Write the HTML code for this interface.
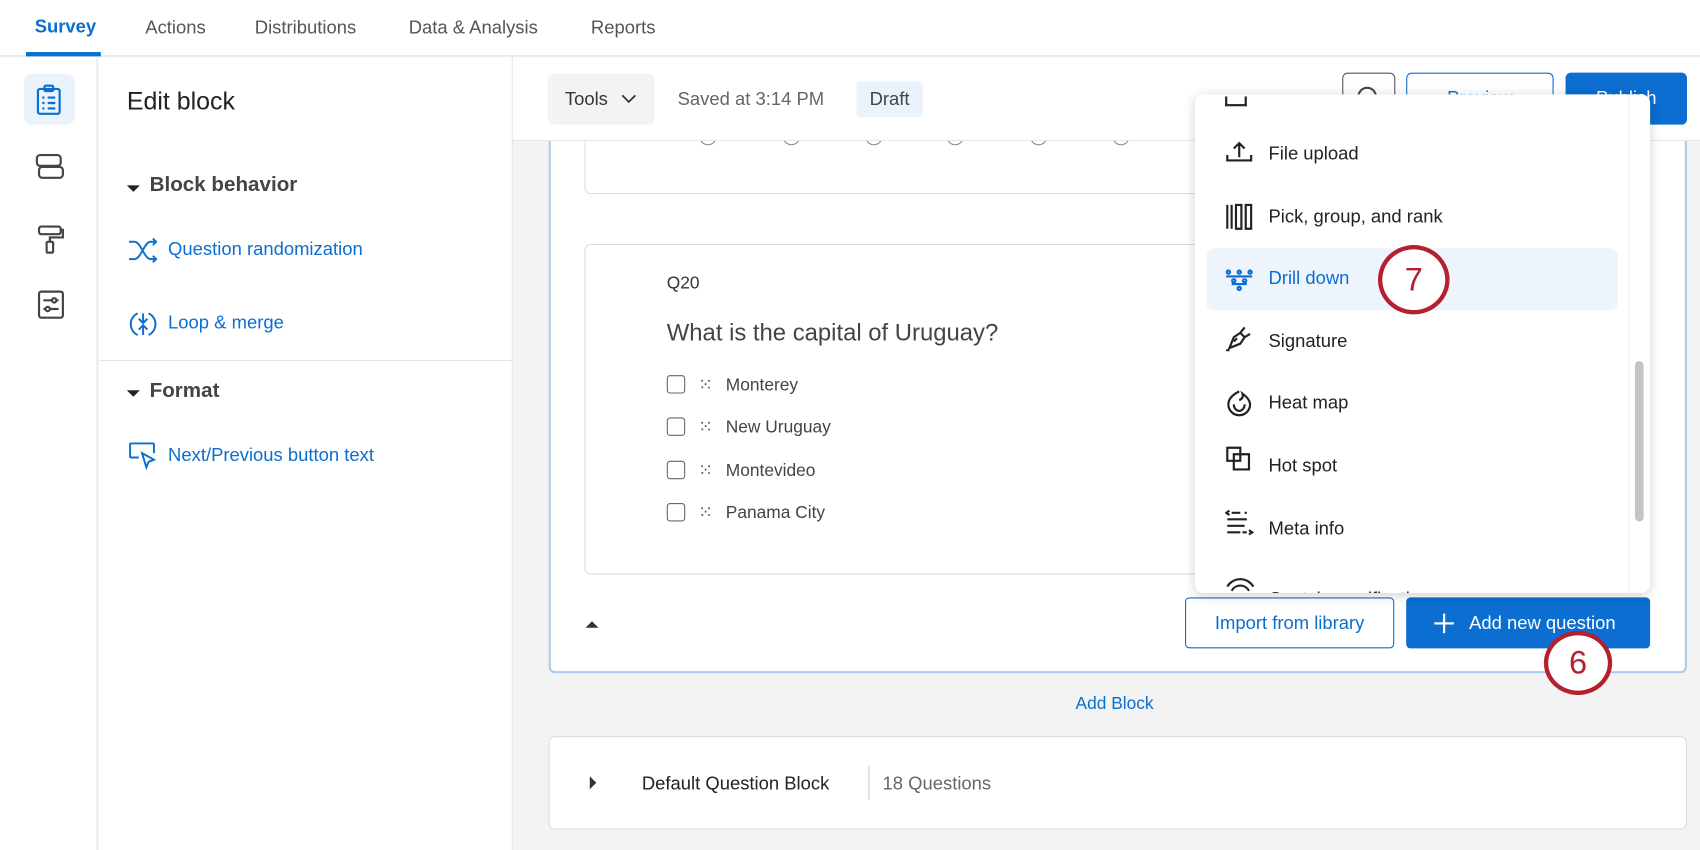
<!DOCTYPE html>
<html><head><meta charset="utf-8"><style>
*{box-sizing:border-box;margin:0;padding:0}
html,body{width:1700px;height:850px;overflow:hidden;background:#fff;font-family:"Liberation Sans",sans-serif}
#w{position:absolute;left:0;top:0;width:1568px;height:784px;transform:scale(1.08418);transform-origin:0 0;background:#f3f3f4}
.a{position:absolute}
.t{color:#32363a}
.blue{color:#0b6ed0}
.rc{position:absolute;top:118px;width:16px;height:16px;border:1.5px solid #888;border-radius:50%}
</style></head><body><div id="w">
<div class="a" style="left:0;top:0;width:1568px;height:52px;background:#fff;border-bottom:1px solid #e4e4e6"></div>
<div class="a" style="left:32px;top:15px;font-size:17px;font-weight:bold;color:#0b6ed0">Survey</div>
<div class="a" style="left:24px;top:48px;width:69px;height:4px;background:#0b6ed0"></div>
<div class="a t" style="left:134px;top:16px;font-size:17px;color:#555">Actions</div>
<div class="a t" style="left:235px;top:16px;font-size:17px;color:#555">Distributions</div>
<div class="a t" style="left:377px;top:16px;font-size:17px;color:#555">Data &amp; Analysis</div>
<div class="a t" style="left:545px;top:16px;font-size:17px;color:#555">Reports</div>
<div class="a" style="left:0;top:53px;width:90px;height:731px;background:#fff;border-right:1px solid #e4e4e6"></div>
<div class="a" style="left:22px;top:68px;width:47px;height:47px;background:#eaf2fc;border-radius:8px"></div>
<svg class="a" style="left:32px;top:77px" width="26" height="30" viewBox="0 0 26 30" fill="none" stroke="#0b6ed0" stroke-width="2"><rect x="3" y="5" width="20" height="23" rx="2"/><rect x="9" y="2" width="8" height="5" rx="1"/><path d="M7 13h2M12 13h7M7 18h2M12 18h7M7 23h2M12 23h7"/></svg>
<svg class="a" style="left:32px;top:140px" width="28" height="28" viewBox="0 0 28 28" fill="none" stroke="#444" stroke-width="2"><rect x="2" y="3" width="22" height="10" rx="3"/><rect x="4" y="14" width="22" height="10" rx="3"/></svg>
<svg class="a" style="left:34px;top:207px" width="26" height="28" viewBox="0 0 26 28" fill="none" stroke="#444" stroke-width="2"><rect x="2" y="2" width="20" height="7" rx="2"/><path d="M22 5h2v7H12v4"/><rect x="9" y="16" width="6" height="10" rx="1"/></svg>
<svg class="a" style="left:34px;top:267px" width="26" height="28" viewBox="0 0 26 28" fill="none" stroke="#444" stroke-width="2"><rect x="2" y="2" width="22" height="24" rx="2"/><path d="M6 10h8M18 10h2M6 18h2M12 18h8"/><circle cx="16" cy="10" r="2"/><circle cx="10" cy="18" r="2"/></svg>
<div class="a" style="left:91px;top:53px;width:382px;height:731px;background:#fff;border-right:1px solid #e4e4e6"></div>
<div class="a t" style="left:117px;top:80px;font-size:23px;color:#222">Edit block</div>
<div class="a" style="left:117px;top:171px;border-left:6px solid transparent;border-right:6px solid transparent;border-top:6px solid #222"></div>
<div class="a" style="left:138px;top:160px;font-size:19px;font-weight:bold;color:#444">Block behavior</div>
<svg class="a" style="left:118px;top:219px" width="28" height="24" viewBox="0 0 28 24" fill="none" stroke="#0b6ed0" stroke-width="1.8"><path d="M1 4h5c6 0 9 16 15 16h5M1 20h5c6 0 9-16 15-16h5M23 1l3 3-3 3M23 17l3 3-3 3"/></svg>
<div class="a blue" style="left:155px;top:220px;font-size:17px">Question randomization</div>
<svg class="a" style="left:118px;top:285px" width="28" height="28" viewBox="0 0 28 28" fill="none" stroke="#0b6ed0" stroke-width="1.8"><path d="M9 4A11 11 0 0 0 9 24M19 4a11 11 0 0 1 0 20M14 4v9M10 9l4 4 4-4M14 24v-9M10 19l4-4 4 4"/></svg>
<div class="a blue" style="left:155px;top:288px;font-size:17px">Loop &amp; merge</div>
<div class="a" style="left:91px;top:332px;width:382px;height:1px;background:#e4e4e6"></div>
<div class="a" style="left:117px;top:360px;border-left:6px solid transparent;border-right:6px solid transparent;border-top:6px solid #222"></div>
<div class="a" style="left:138px;top:350px;font-size:19px;font-weight:bold;color:#444">Format</div>
<svg class="a" style="left:118px;top:406px" width="28" height="28" viewBox="0 0 28 28" fill="none" stroke="#0b6ed0" stroke-width="1.8"><path d="M10 16H3a1 1 0 0 1-1-1V4a1 1 0 0 1 1-1h20a1 1 0 0 1 1 1v8M13 12l4 13 2-5 5-2z"/></svg>
<div class="a blue" style="left:155px;top:410px;font-size:17px">Next/Previous button text</div>
<div class="a" style="left:506px;top:100px;width:1050px;height:521px;background:#fff;border:2px solid #a8ccef;border-top:none;border-radius:0 0 6px 6px"></div>
<div class="a" style="left:539px;top:100px;width:600px;height:79px;border:1px solid #dcdcde;border-top:none;border-radius:0 0 6px 6px"></div>
<div class="rc" style="left:645px"></div><div class="rc" style="left:722px"></div><div class="rc" style="left:798px"></div><div class="rc" style="left:873px"></div><div class="rc" style="left:950px"></div><div class="rc" style="left:1026px"></div>
<div class="a" style="left:539px;top:225px;width:600px;height:305px;border:1px solid #dcdcde;border-radius:6px;background:#fff"></div>
<div class="a t" style="left:615px;top:253px;font-size:16px">Q20</div>
<div class="a" style="left:615px;top:294px;font-size:22px;color:#444">What is the capital of Uruguay?</div>
<div class="a" style="left:615px;top:336px;font-size:16px;color:#444;line-height:39.3px">
<div><span style="display:inline-block;width:17px;height:17px;border:1.5px solid #666;border-radius:3px;vertical-align:-3px;margin-right:12px"></span><span style="color:#555;margin-right:12px">⁙</span>Monterey</div>
<div><span style="display:inline-block;width:17px;height:17px;border:1.5px solid #666;border-radius:3px;vertical-align:-3px;margin-right:12px"></span><span style="color:#555;margin-right:12px">⁙</span>New Uruguay</div>
<div><span style="display:inline-block;width:17px;height:17px;border:1.5px solid #666;border-radius:3px;vertical-align:-3px;margin-right:12px"></span><span style="color:#555;margin-right:12px">⁙</span>Montevideo</div>
<div><span style="display:inline-block;width:17px;height:17px;border:1.5px solid #666;border-radius:3px;vertical-align:-3px;margin-right:12px"></span><span style="color:#555;margin-right:12px">⁙</span>Panama City</div>
</div>
<div class="a" style="left:540px;top:573px;border-left:6px solid transparent;border-right:6px solid transparent;border-bottom:6px solid #333"></div>
<div class="a" style="left:1093px;top:551px;width:193px;height:47px;border:1.5px solid #0b6ed0;border-radius:4px;background:#fff;color:#0b6ed0;font-size:17px;text-align:center;line-height:46px">Import from library</div>
<div class="a" style="left:1297px;top:551px;width:225px;height:47px;border-radius:4px;background:#0b6ed0;color:#fff;font-size:17px;line-height:47px;padding-left:58px">Add new question</div>
<div class="a" style="left:1323px;top:574px;width:18px;height:2px;background:#fff"></div>
<div class="a" style="left:1331px;top:566px;width:2px;height:18px;background:#fff"></div>
<div class="a" style="left:1424px;top:582px;width:63px;height:59px;border:4px solid #b5202e;border-radius:50%;background:#fff;color:#b5202e;font-size:30px;text-align:center;line-height:52px">6</div>
<div class="a blue" style="left:992px;top:641px;font-size:16px">Add Block</div>
<div class="a" style="left:506px;top:679px;width:1050px;height:86px;background:#fff;border:1px solid #dcdcde;border-radius:6px"></div>
<div class="a" style="left:544px;top:716px;border-top:6px solid transparent;border-bottom:6px solid transparent;border-left:6px solid #333"></div>
<div class="a" style="left:592px;top:713px;font-size:17px;color:#222">Default Question Block</div>
<div class="a" style="left:801px;top:706px;width:1px;height:32px;background:#ccc"></div>
<div class="a" style="left:814px;top:713px;font-size:17px;color:#666">18 Questions</div>
<div class="a" style="left:473px;top:53px;width:1095px;height:77px;background:#fff;border-bottom:1px solid #e8e8ea"></div>
<div class="a" style="left:505px;top:68px;width:99px;height:47px;background:#f3f3f4;border-radius:6px"></div>
<div class="a t" style="left:521px;top:82px;font-size:17px">Tools</div>
<svg class="a" style="left:573px;top:86px" width="14" height="10" viewBox="0 0 14 10" fill="none" stroke="#333" stroke-width="1.6"><path d="M1 2l6 6 6-6"/></svg>
<div class="a" style="left:625px;top:82px;font-size:17px;color:#666">Saved at 3:14 PM</div>
<div class="a" style="left:790px;top:75px;width:61px;height:33px;background:#eaf2fc;border-radius:4px;color:#444;font-size:17px;text-align:center;line-height:33px">Draft</div>
<div class="a" style="left:1238px;top:67px;width:49px;height:48px;border:1.5px solid #555;border-radius:5px"></div>
<div class="a" style="left:1252px;top:80px;width:18px;height:18px;border:2px solid #444;border-radius:50%"></div>
<div class="a" style="left:1297px;top:67px;width:136px;height:48px;border:1.5px solid #0b6ed0;border-radius:5px;color:#0b6ed0;font-size:17px;text-align:center;line-height:45px">Preview</div>
<div class="a" style="left:1444px;top:67px;width:112px;height:48px;background:#0b6ed0;border-radius:5px;color:#fff;font-size:17px;text-align:center;line-height:48px">Publish</div>
<div class="a" style="left:1102px;top:87px;width:420px;height:460px;background:#fff;border-radius:8px;box-shadow:0 2px 10px rgba(0,0,0,.18);overflow:hidden">
<div class="a" style="left:28px;top:2px;width:20px;height:9px;border:2px solid #222;border-top:none"></div>
<div class="a" style="left:11px;top:142px;width:379px;height:57px;background:#eef4fc;border-radius:6px"></div>
<div style="position:absolute;left:68px;top:0;font-size:17px;color:#222;line-height:57.6px;padding-top:26px">
<div>File upload</div><div>Pick, group, and rank</div><div style="color:#0b6ed0">Drill down</div><div>Signature</div><div>Heat map</div><div>Hot spot</div><div>Meta info</div><div style="padding-top:8px">Captcha verification</div></div>
<svg class="a" style="left:28px;top:42px" width="28" height="440" viewBox="0 0 28 440" fill="none" stroke="#222" stroke-width="2">
<path d="M2 14v5h22v-5M13 16V4M8 8l5-5 5 5"/>
<path d="M2 60v22M6 60v22M10 60h5v22h-5zM19 60h5v22h-5z"/>
<g stroke="#0b6ed0"><circle cx="3" cy="122" r="1.5"/><circle cx="13" cy="122" r="1.5"/><circle cx="23" cy="122" r="1.5"/><path d="M1 126h24"/><circle cx="8" cy="130" r="1.5"/><circle cx="18" cy="130" r="1.5"/><path d="M6 133h14"/><circle cx="13" cy="137" r="1.5"/></g>
<path d="M4 192l4-10 6-4 4 4-4 6-10 4zM14 178l4-5M18 182l5-3M8 186l3-3M1 194h3"/>
<path d="M13 232c-6 3-10 7-10 12a10 10 0 0 0 20 0c0-4-3-7-7-10 1 3 0 5-3 6M8 244c0 4 3 6 5 6s5-2 5-6"/>
<path d="M2 284h12v12H2zM8 290h14v14H8z"/>
<path d="M4 342l-3 2 3 2M6 344h8M18 344h2M2 350h18M2 356h16M2 362h12M16 362h4M22 360l3 2-3 2"/>
<path d="M2 412a14 14 0 0 1 24 0M6 416a9 9 0 0 1 16 0"/>
</svg>
<div class="a" style="left:406px;top:246px;width:8px;height:148px;background:#c4c4c6;border-radius:4px"></div>
<div class="a" style="left:400px;top:0;width:1px;height:460px;background:#eee"></div>
</div>
<div class="a" style="left:1271px;top:226px;width:66px;height:64px;border:4px solid #b5202e;border-radius:50%;background:#fff;color:#b5202e;font-size:30px;text-align:center;line-height:57px">7</div>
</div></body></html>
